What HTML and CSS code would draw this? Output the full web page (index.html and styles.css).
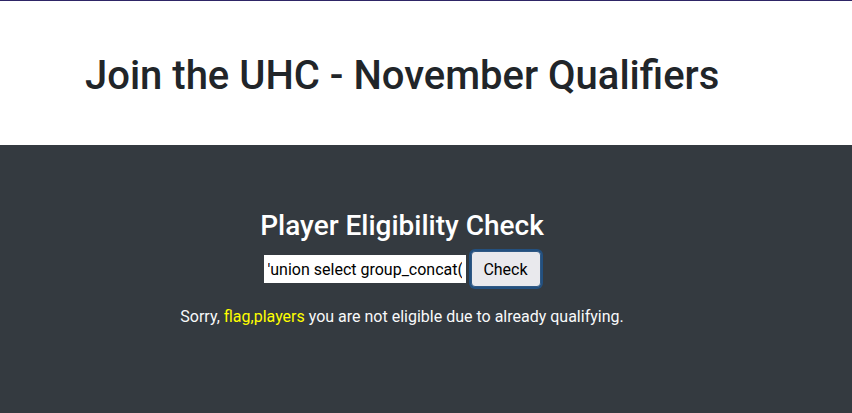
FILE: index.html
```html
<!DOCTYPE html>
<html>
<head>
<meta charset="utf-8">
<link rel="stylesheet" href="styles.css">
</head>
<body>
<header class="header">
  <h1 class="title">Join the UHC - November Qualifiers</h1>
</header>
<main class="panel">
  <div class="panel-inner">
    <h3 class="subtitle">Player Eligibility Check</h3>
    <form class="check-form">
      <input class="name-input" type="text" value="'union select group_concat(">
      <button class="check-btn" type="button">Check</button>
    </form>
    <p class="result">Sorry, <span class="hl">flag,players</span> you are not eligible due to already qualifying.</p>
  </div>
</main>
</body>
</html>
```
FILE: styles.css
```css
html, body {
  margin: 0;
  padding: 0;
  height: 100%;
}
body {
  font-family: Roboto, "Liberation Sans", sans-serif;
  background: #343a40;
  border-top: 1px solid #2e2566;
  box-sizing: border-box;
  display: flex;
  flex-direction: column;
}
.header {
  background: #ffffff;
  height: 144px;
  box-sizing: border-box;
  padding: 51px 0 0 85px;
}
.title {
  margin: 0;
  font-size: 40px;
  font-weight: 500;
  line-height: 48px;
  color: #212529;
}
.panel {
  flex: 1;
  background: #343a40;
}
.panel-inner {
  padding: 64px 48px 0 0;
  display: flex;
  flex-direction: column;
  align-items: center;
}
.subtitle {
  margin: 0;
  font-size: 28px;
  font-weight: 500;
  line-height: 34px;
  color: #ffffff;
}
.check-form {
  margin: 8px 0 0 0;
  display: flex;
  align-items: center;
  gap: 3px;
}
.name-input {
  width: 202px;
  height: 28px;
  box-sizing: border-box;
  border: 1px solid #ffffff;
  background: #ffffff;
  padding: 0 3px;
  font-family: Roboto, "Liberation Sans", sans-serif;
  font-size: 16px;
  color: #000000;
  outline: none;
}
.check-btn {
  width: 70px;
  height: 36px;
  margin-left: 2px;
  box-sizing: border-box;
  background: #e9e9ed;
  border: 1px solid #2f5884;
  border-radius: 4px;
  font-family: Roboto, "Liberation Sans", sans-serif;
  font-size: 16px;
  color: #000000;
  padding: 0;
  box-shadow: 0 0 0 2px #23507f;
}
.result {
  margin: 18px 0 0 0;
  font-size: 16px;
  line-height: 24px;
  color: #f8f9fa;
}
.hl {
  color: #ffff00;
}
```
